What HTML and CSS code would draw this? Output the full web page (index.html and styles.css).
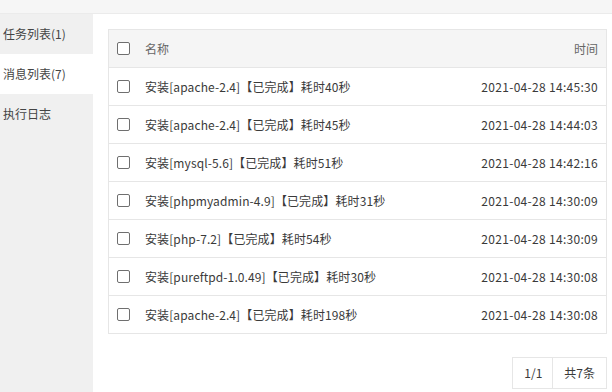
FILE: index.html
```html
<!DOCTYPE html>
<html lang="zh">
<head>
<meta charset="utf-8">
<title>消息列表</title>
<link rel="stylesheet" href="styles.css">
</head>
<body>
<div class="topbar"></div>
<div class="layout">
  <nav class="sidebar">
    <div class="nav-item">任务列表(1)</div>
    <div class="nav-item active">消息列表(7)</div>
    <div class="nav-item">执行日志</div>
  </nav>
  <main class="main">
    <div class="table">
      <div class="row head">
        <span class="cb"></span><span class="name">名称</span><span class="time">时间</span>
      </div>
      <div class="row"><span class="cb"></span><span class="name">安装[apache-2.4]【已完成】耗时40秒</span><span class="time">2021-04-28 14:45:30</span></div>
      <div class="row"><span class="cb"></span><span class="name">安装[apache-2.4]【已完成】耗时45秒</span><span class="time">2021-04-28 14:44:03</span></div>
      <div class="row"><span class="cb"></span><span class="name">安装[mysql-5.6]【已完成】耗时51秒</span><span class="time">2021-04-28 14:42:16</span></div>
      <div class="row"><span class="cb"></span><span class="name">安装[phpmyadmin-4.9]【已完成】耗时31秒</span><span class="time">2021-04-28 14:30:09</span></div>
      <div class="row"><span class="cb"></span><span class="name">安装[php-7.2]【已完成】耗时54秒</span><span class="time">2021-04-28 14:30:09</span></div>
      <div class="row"><span class="cb"></span><span class="name">安装[pureftpd-1.0.49]【已完成】耗时30秒</span><span class="time">2021-04-28 14:30:08</span></div>
      <div class="row"><span class="cb"></span><span class="name">安装[apache-2.4]【已完成】耗时198秒</span><span class="time">2021-04-28 14:30:08</span></div>
    </div>
    <div class="pager">
      <span class="page-cell">1/1</span><span class="page-cell">共7条</span>
    </div>
  </main>
</div>
</body>
</html>
```
FILE: styles.css
```css
html, body {
  margin: 0;
  padding: 0;
  height: 100%;
}
body {
  font-family: "Noto Sans CJK SC", "Noto Sans", sans-serif;
  font-size: 12px;
  color: #3a3a3a;
  background: #fff;
  display: flex;
  flex-direction: column;
  overflow: hidden;
}
.topbar {
  height: 13px;
  background: #f6f6f6;
  border-bottom: 1px solid #ebebeb;
  flex: none;
}
.layout {
  flex: 1;
  display: flex;
}
.sidebar {
  width: 93px;
  background: #f0f0f0;
  flex: none;
}
.nav-item {
  height: 40px;
  line-height: 40px;
  padding-left: 3px;
  color: #444;
  white-space: nowrap;
}
.nav-item.active {
  background: #fff;
}
.main {
  flex: 1;
  padding: 15px 5px 0 15px;
  display: flex;
  flex-direction: column;
}
.table {
  border: 1px solid #e6e6e6;
}
.row {
  height: 37px;
  display: flex;
  align-items: center;
  padding: 0 8px;
  border-top: 1px solid #e6e6e6;
}
.row:first-child {
  border-top: none;
}
.row.head {
  background: #f5f5f5;
  color: #666;
}
.cb {
  width: 11px;
  height: 11px;
  border: 1px solid #6f6f6f;
  border-radius: 2px;
  background: #fff;
  flex: none;
  margin-right: 15px;
}
.name {
  flex: 1;
  white-space: nowrap;
  letter-spacing: 0.1px;
}
.time {
  white-space: nowrap;
  letter-spacing: 0.3px;
}
.head .time {
  letter-spacing: 0;
}
.pager {
  align-self: flex-end;
  display: flex;
  margin-top: 23px;
  border: 1px solid #e6e6e6;
}
.page-cell {
  height: 30px;
  line-height: 30px;
  padding: 0 11px;
}
.page-cell:first-child {
  padding: 0 10px 0 11px;
}
.page-cell + .page-cell {
  border-left: 1px solid #e6e6e6;
}
```
